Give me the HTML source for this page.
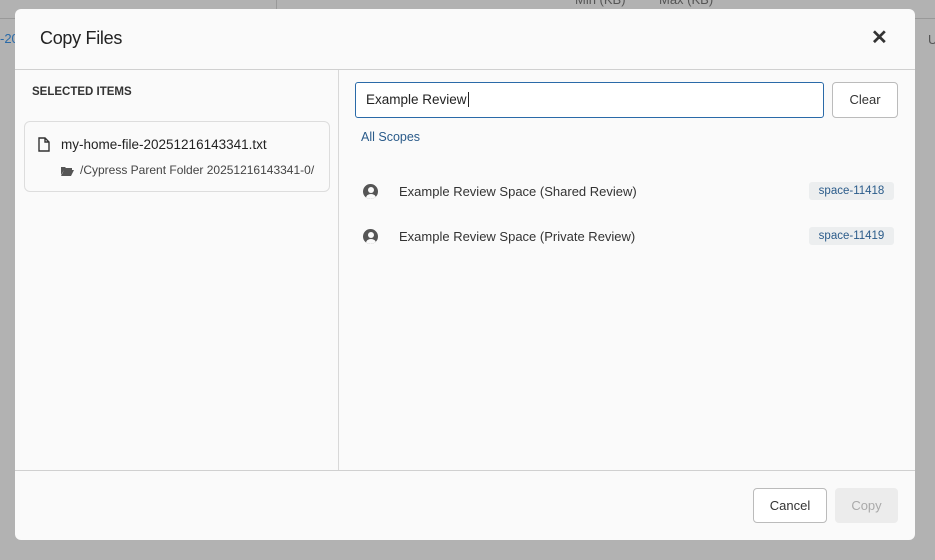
<!DOCTYPE html>
<html><head><style>
*{box-sizing:border-box;margin:0;padding:0}
body{width:935px;height:560px;background:#b2b2b2;font-family:"Liberation Sans",sans-serif;position:relative;overflow:hidden;color:#333}
.bg{position:absolute;font-size:13px;color:#555}
.modal{position:absolute;left:15px;top:9px;width:900px;height:531px;background:#fafafa;border-radius:6px;overflow:hidden}
.hdr{height:61px;border-bottom:1px solid #d0d0d0;position:relative}
.hdr h1{position:absolute;left:25px;top:19px;font-size:18px;font-weight:normal;color:#222;letter-spacing:-0.3px}
.x{position:absolute;left:856px;top:16px;font-size:20px;font-weight:bold;color:#333}
.left{position:absolute;left:0;top:61px;width:324px;height:401px;border-right:1px solid #d8d8d8}
.right{position:absolute;left:324px;top:61px;width:576px;height:401px}
.ftr{position:absolute;left:0;top:461px;width:900px;height:70px;border-top:1px solid #d0d0d0}
.btn{position:absolute;border:1px solid #bbb;border-radius:4px;background:#fff;font-size:13px;text-align:center;color:#333}
.tag{position:absolute;left:470px;width:85px;text-align:center;background:#eceeef;border-radius:3px;font-size:11.5px;color:#2a5b8a;padding:3px 0}
.row{position:absolute;left:60px;font-size:13px;color:#333}
.ic{position:absolute;left:24px;width:15px;height:15px;border-radius:50%;background:#555;overflow:hidden}
.ic::before{content:"";position:absolute;left:4.5px;top:2.5px;width:6px;height:6px;border-radius:50%;background:#fafafa}
.ic::after{content:"";position:absolute;left:2.5px;top:10px;width:10px;height:8px;border-radius:50%;background:#fafafa}
</style></head><body>
<div class="bg" style="left:0;top:31px;color:#2a6aa8">-20</div>
<div class="bg" style="left:928px;top:32px">U</div>
<div class="bg" style="left:575px;top:-8px">Min (KB)</div>
<div class="bg" style="left:659px;top:-8px">Max (KB)</div>
<div style="position:absolute;left:276px;top:0;width:1px;height:9px;background:#999"></div>
<div style="position:absolute;left:0;top:18px;width:935px;height:1px;background:#999"></div>
<div class="modal">
 <div class="hdr"><h1>Copy Files</h1><div class="x">✕</div></div>
 <div class="left">
  <div style="position:absolute;left:17px;top:16px;font-size:11.5px;font-weight:bold;color:#333">SELECTED ITEMS</div>
  <div style="position:absolute;left:9px;top:51px;width:306px;height:71px;border:1px solid #ddd;border-radius:6px;background:#fafafa">
   <svg style="position:absolute;left:13px;top:15px" width="12" height="15" viewBox="0 0 12 15"><path d="M1 1h6l4 4v9H1z M7 1v4h4" fill="none" stroke="#333" stroke-width="1.4"/></svg>
   <div style="position:absolute;left:36px;top:15px;font-size:13.5px;color:#222">my-home-file-20251216143341.txt</div>
   <svg style="position:absolute;left:36px;top:44px" width="13" height="10" viewBox="0 0 13 10"><path d="M0 1h4l1 1h6v2H3L0 9z M3 4h10l-3 6H0z" fill="#555"/></svg>
   <div style="position:absolute;left:55px;top:41px;font-size:12px;color:#444">/Cypress Parent Folder 20251216143341-0/</div>
  </div>
 </div>
 <div class="right">
  <div style="position:absolute;left:16px;top:12px;width:469px;height:36px;border:1.5px solid #2a6aa8;border-radius:3px;background:#fff;font-size:13.5px;padding:9px 10px;color:#222">Example Review<span style="border-left:1px solid #222;margin-left:1px"></span></div>
  <div class="btn" style="left:493px;top:12px;width:66px;height:36px;line-height:34px">Clear</div>
  <div style="position:absolute;left:22px;top:60px;font-size:12.5px;color:#2a5b8a">All Scopes</div>
  <div class="ic" style="top:114px"></div><div class="row" style="top:114px">Example Review Space (Shared Review)</div>
  <div class="tag" style="top:112px">space-11418</div>
  <div class="ic" style="top:159px"></div><div class="row" style="top:159px">Example Review Space (Private Review)</div>
  <div class="tag" style="top:157px">space-11419</div>
 </div>
 <div class="ftr">
  <div class="btn" style="left:738px;top:17px;width:74px;height:35px;line-height:33px">Cancel</div>
  <div class="btn" style="left:820px;top:17px;width:63px;height:35px;line-height:33px;background:#ececec;border-color:#ececec;color:#aaa">Copy</div>
 </div>
</div>
</body></html>
